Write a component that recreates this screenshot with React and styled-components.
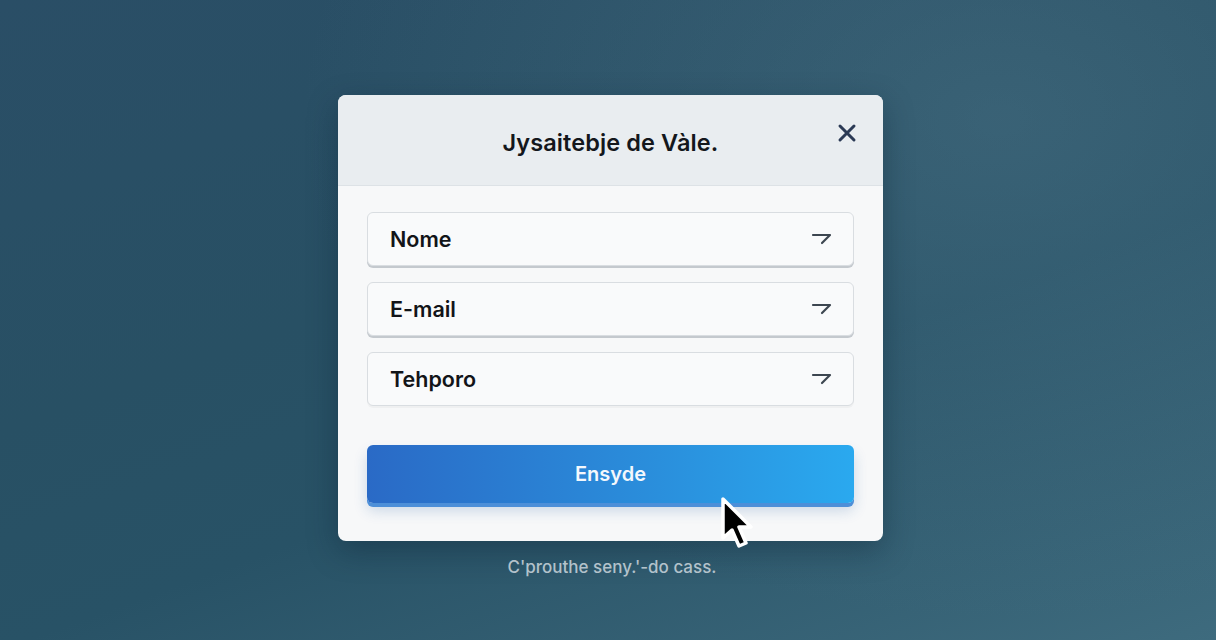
import React from "react"
import styled, { createGlobalStyle } from "styled-components"

const GlobalStyle = createGlobalStyle`
    html, body {
        margin: 0;
        padding: 0;
    }
    body {
        font-family: "Inter", "Noto Sans", sans-serif;
    }
`

const Page = styled.div`
    width: 1216px;
    height: 640px;
    overflow: hidden;
    position: relative;
    background:
        radial-gradient(ellipse 700px 500px at 1000px 120px, rgba(90, 130, 150, 0.35), transparent),
        linear-gradient(160deg, #2a4e66 0%, #285064 40%, #285266 60%, #3e6b7e 100%);
    display: flex;
    flex-direction: column;
    align-items: center;
    padding-top: 95px;
    box-sizing: border-box;
`

const Modal = styled.div`
    width: 545px;
    background: #f7f8f9;
    border-radius: 8px;
    overflow: hidden;
    box-shadow: 0 10px 30px rgba(10, 30, 45, 0.35);
    margin-left: 5px;
`

const Header = styled.div`
    height: 90px;
    background: #e9edf0;
    border-bottom: 1px solid #dde2e6;
    display: flex;
    align-items: center;
    justify-content: center;
    position: relative;
`

const Title = styled.h2`
    margin: 0;
    font-size: 23.5px;
    font-weight: 600;
    color: #14171c;
    letter-spacing: 0.1px;
    padding-top: 4px;
`

const CloseButton = styled.button`
    position: absolute;
    right: 24px;
    top: 26px;
    width: 24px;
    height: 24px;
    padding: 0;
    border: none;
    background: none;
    color: #2b3a55;
    display: flex;
    align-items: center;
    justify-content: center;
`

const Body = styled.div`
    padding: 26px 29px 38px;
    display: flex;
    flex-direction: column;
`

const Fields = styled.div`
    display: flex;
    flex-direction: column;
    gap: 16px;
`

const Field = styled.div`
    height: 54px;
    box-sizing: border-box;
    border: 1.5px solid #d9dde1;
    border-radius: 6px;
    background: #f9fafb;
    box-shadow: 0 2px 0 ${props => (props.flat ? "rgba(0,0,0,0.03)" : "#c4c9ce")};
    display: flex;
    align-items: center;
    justify-content: space-between;
    padding: 0 20px 0 22px;
`

const Label = styled.span`
    font-size: 21.5px;
    font-weight: 600;
    color: #121418;
`

const Submit = styled.button`
    margin-top: 39px;
    height: 58px;
    border: none;
    border-radius: 6px;
    background: linear-gradient(90deg, #2a6ac6 0%, #2a8fdc 60%, #2aa9ef 100%);
    box-shadow: 0 4px 0 #4d8fd8, 0 8px 14px rgba(30, 90, 160, 0.2);
    color: #f3f8fd;
    font-family: "Inter", "Noto Sans", sans-serif;
    font-size: 20px;
    font-weight: 600;
    display: flex;
    align-items: center;
    justify-content: center;
`

const Caption = styled.p`
    margin: 16px 0 0 8px;
    font-size: 17px;
    line-height: 21px;
    color: #b3c2cb;
    font-weight: 500;
`

const Cursor = styled.svg`
    position: absolute;
    left: 719px;
    top: 496px;
`

const ChevronIcon = () => (
    <svg width="22" height="16" viewBox="0 0 22 16">
        <path
            d="M2 4 L19 4 L11 12"
            fill="none"
            stroke="#3d4650"
            strokeWidth="2.2"
            strokeLinecap="round"
            strokeLinejoin="round"
        />
    </svg>
)

const fields = [
    { label: "Nome" },
    { label: "E-mail" },
    { label: "Tehporo", flat: true },
]

const App = () => (
    <>
        <GlobalStyle />
        <Page>
            <Modal>
                <Header>
                    <Title>Jysaitebje de Vàle.</Title>
                    <CloseButton>
                        <svg width="20" height="20" viewBox="0 0 20 20">
                            <path
                                d="M3 3 L17 17 M17 3 L3 17"
                                stroke="#2b3a55"
                                strokeWidth="3"
                                strokeLinecap="round"
                            />
                        </svg>
                    </CloseButton>
                </Header>
                <Body>
                    <Fields>
                        {fields.map(f => (
                            <Field key={f.label} flat={f.flat}>
                                <Label>{f.label}</Label>
                                <ChevronIcon />
                            </Field>
                        ))}
                    </Fields>
                    <Submit>Ensyde</Submit>
                </Body>
            </Modal>
            <Caption>C'prouthe seny.'-do cass.</Caption>
            <Cursor width="36" height="58" viewBox="0 0 36 58">
                <path
                    d="M4 3 L4 42 L13 34 L20 50 L27 47 L20 31 L32 31 Z"
                    fill="#000"
                    stroke="#fff"
                    strokeWidth="3.5"
                    strokeLinejoin="round"
                />
            </Cursor>
        </Page>
    </>
)

export default App
